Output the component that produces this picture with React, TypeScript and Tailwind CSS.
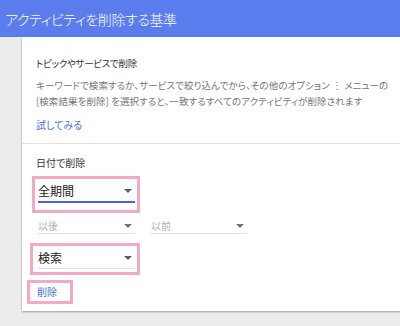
const jp = "font-['Noto_Sans_CJK_JP','Noto_Sans',sans-serif] [font-feature-settings:'palt']"

const Arrow = ({ light }: { light?: boolean }) => (
  <span
    className={`block w-0 h-0 border-l-[4px] border-r-[4px] border-t-[4px] border-l-transparent border-r-transparent ${
      light ? 'border-t-[#757575]' : 'border-t-[#616161]'
    }`}
  />
)

export default function App() {
  return (
    <div className={`w-[400px] h-[326px] bg-[#ececec] flex flex-col overflow-hidden ${jp}`}>
      <div className="h-[37px] bg-[#5b7ced] flex items-center px-[5px] shrink-0">
        <span className="text-white text-[14px] leading-none font-light tracking-[-0.4px]">アクティビティを削除する基準</span>
      </div>

      <div className="pl-[22px]">
        <div className="bg-white h-[274px] shadow-[0_1px_2px_rgba(0,0,0,0.35)]">
          <div className="px-[14px] pt-[19px] pb-[11px] border-b border-[#e0e0e0]">
            <div className="text-[9.5px] leading-[14px] text-[#333] tracking-[-0.3px]">トピックやサービスで削除</div>
            <p className="mt-[7px] text-[9.5px] leading-[16px] text-[#757575] whitespace-nowrap tracking-[0.08px]">
              キーワードで検索するか、サービスで絞り込んでから、その他のオプション ⋮ メニューの
              <br />
              [検索結果を削除] を選択すると、一致するすべてのアクティビティが削除されます
            </p>
            <div className="mt-[9px] text-[10px] leading-[14px] text-[#4a6fdc]">試してみる</div>
          </div>

          <div className="px-[14px] pt-[12px]">
            <div className="text-[10px] leading-[14px] text-[#333]">日付で削除</div>

            <div className="mt-[6px] -ml-[4px] w-[108px] h-[37px] border-[3px] border-[#f3a8c8] pl-[3px] pr-[2px]">
              <div className="h-[24px] flex items-end justify-between pb-[2px] border-b-2 border-[#4565d6] pr-[3px]">
                <span className="text-[12px] leading-[16px] text-[#212121]">全期間</span>
                <span className="mb-[6px]"><Arrow /></span>
              </div>
            </div>

            <div className="mt-[4px] flex gap-[16px] pl-[2px]">
              <div className="w-[97px] h-[17px] flex items-end justify-between border-b border-[#e0e0e0] pr-[3px]">
                <span className="text-[10px] leading-[14px] text-[#b0b0b0]">以後</span>
                <span className="mb-[5px]"><Arrow light /></span>
              </div>
              <div className="w-[96px] h-[17px] flex items-end justify-between border-b border-[#e0e0e0] pr-[3px]">
                <span className="text-[10px] leading-[14px] text-[#b0b0b0]">以前</span>
                <span className="mb-[5px]"><Arrow light /></span>
              </div>
            </div>

            <div className="mt-[9px] -ml-[6px] w-[110px] h-[32px] border-[3px] border-[#f3a8c8] pl-[5px] pr-[2px]">
              <div className="h-[23px] flex items-end justify-between pb-[2px] border-b border-[#e0e0e0] pr-[3px]">
                <span className="text-[12px] leading-[16px] text-[#212121]">検索</span>
                <span className="mb-[6px]"><Arrow /></span>
              </div>
            </div>

            <div className="mt-[5px] -ml-[9px] w-[46px] h-[24px] border-[3px] border-[#f3a8c8] flex items-center pl-[7px]">
              <span className="text-[10px] leading-[14px] text-[#4a6fdc]">削除</span>
            </div>
          </div>
        </div>
      </div>
    </div>
  )
}
